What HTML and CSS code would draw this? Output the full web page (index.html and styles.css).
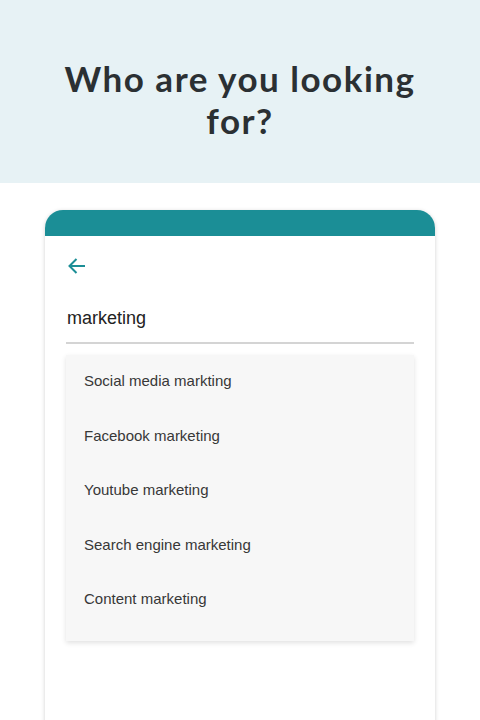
FILE: index.html
```html
<!DOCTYPE html>
<html>
<head>
	<title>Search</title>
	<link rel="stylesheet" href="styles.css">
</head>
<body>
	<div class="hero">
		<h1>Who are you looking for?</h1>
	</div>

	<div class="card">
		<div class="card-top"></div>
		<div class="card-body">
			<a class="back" href="#">
				<svg width="20" height="20" viewBox="0 0 20 20"><path d="M18 10H2.5M9.5 3L2.5 10l7 7" fill="none" stroke="#1b8e96" stroke-width="2"/></svg>
			</a>
			<div class="search">marketing</div>
			<ul class="suggest">
				<li>Social media markting</li>
				<li>Facebook marketing</li>
				<li>Youtube marketing</li>
				<li>Search engine marketing</li>
				<li>Content marketing</li>
			</ul>
		</div>
	</div>
</body>
</html>
```

FILE: styles.css
```css
*{
	margin: 0;
	padding: 0;
	box-sizing: border-box;
}
body{
	font-family: "Liberation Sans", Arial, sans-serif;
	background: #fff;
	width: 480px;
	height: 720px;
	overflow: hidden;
}
ul{
	list-style: none;
}
.hero{
	height: 183px;
	background: #e7f2f5;
	padding-top: 57px;
}
.hero h1{
	font-family: Lato, sans-serif;
	font-weight: 700;
	font-size: 35px;
	line-height: 42px;
	letter-spacing: 1.5px;
	color: #2b3033;
	text-align: center;
	padding: 0 50px;
}
.card{
	margin: 27px 45px 0;
	height: 520px;
	background: #fff;
	border-radius: 18px 18px 0 0;
	box-shadow: 0 1px 4px rgba(0,0,0,0.18);
	overflow: hidden;
}
.card-top{
	height: 26px;
	background: #1b8e96;
}
.card-body{
	padding: 20px 21px 0;
}
.back{
	display: block;
	width: 20px;
	height: 20px;
	margin-left: 1px;
}
.search{
	margin-top: 32px;
	padding: 0 1px 13px;
	font-size: 18px;
	line-height: 21px;
	color: #222;
	border-bottom: 2px solid #d4d4d4;
}
.suggest{
	margin-top: 11px;
	background: #f7f7f7;
	box-shadow: 0 2px 5px rgba(0,0,0,0.12);
	padding: 13px 0 0;
}
.suggest li{
	height: 54.5px;
	line-height: 26px;
	padding-left: 18px;
	font-size: 15px;
	color: #383838;
}
```
